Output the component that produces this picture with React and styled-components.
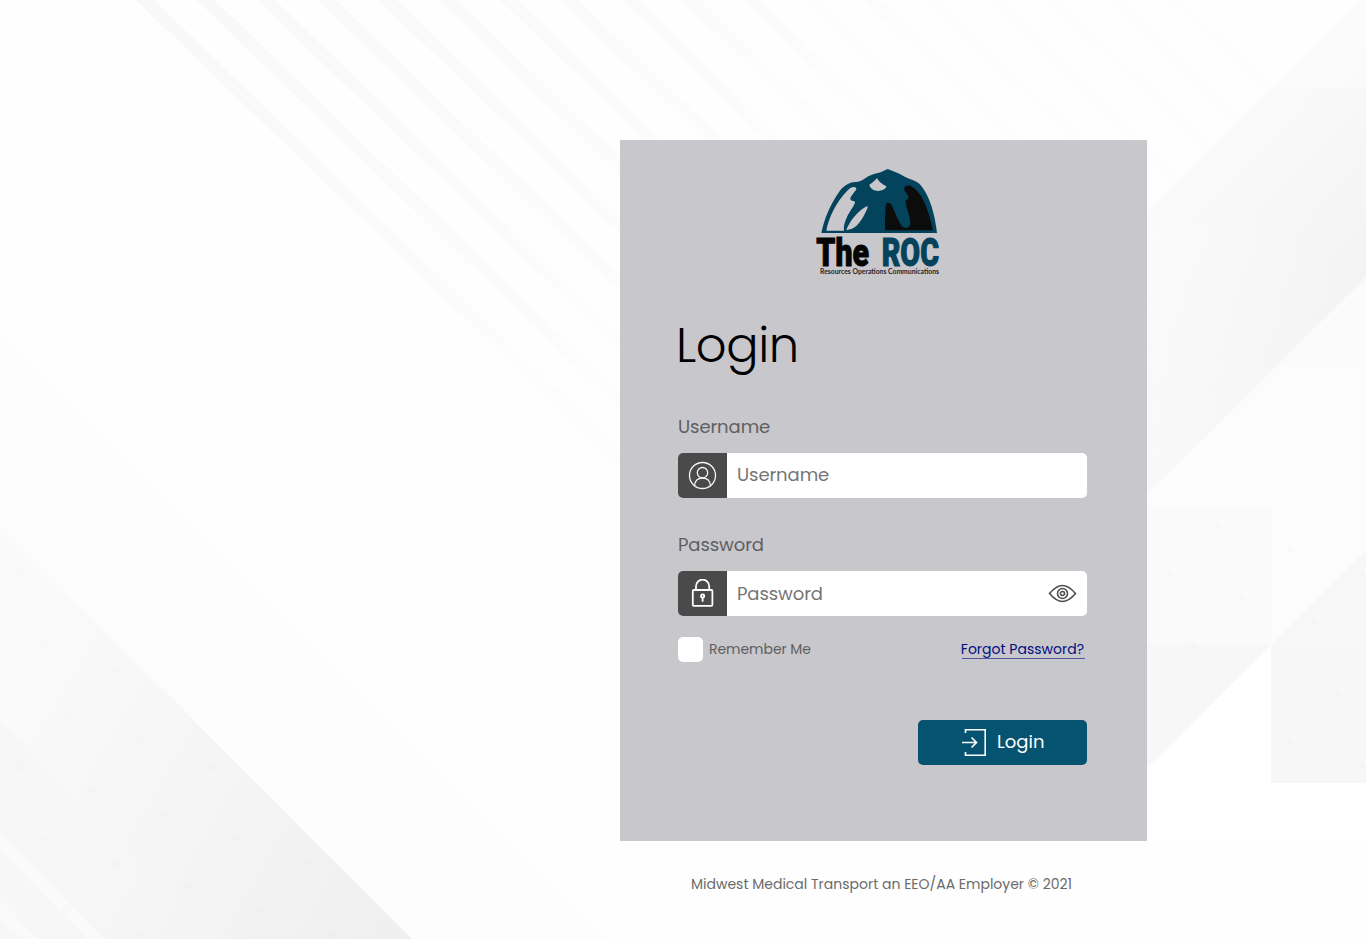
import React from "react";
import styled, { createGlobalStyle } from "styled-components";

const GlobalStyle = createGlobalStyle`
  *, *::before, *::after { box-sizing: border-box; }
  body {
    margin: 0;
    background: #fefefe;
    font-family: Poppins, Inter, "Liberation Sans", sans-serif;
    color: #5f5f61;
  }
`;

const Page = styled.main`
  position: relative;
  width: 100%;
  height: 939px;
  overflow: hidden;
  padding: 140px 0 0 620px;
`;

const Backdrop = styled.svg`
  position: absolute;
  inset: 0;
  z-index: -1;
`;

const Card = styled.form`
  display: flex;
  flex-direction: column;
  width: 527px;
  height: 701px;
  padding: 20px 60px 0 58px;
  background: #c8c7cc;
`;

const Logo = styled.svg`
  display: block;
  flex: none;
  margin-left: 127px;
  overflow: visible;
`;

const Title = styled.h1`
  margin: 25px 0 0 -2px;
  height: 72px;
  font-size: 48px;
  font-weight: 300;
  line-height: 72px;
  letter-spacing: -0.4px;
  color: #000;
`;

const Label = styled.label`
  height: 27px;
  margin-top: ${(p) => p.$gap}px;
  font-size: 18px;
  line-height: 27px;
  letter-spacing: -0.08px;
`;

const Field = styled.div`
  display: flex;
  flex: none;
  align-items: center;
  height: 45px;
  margin-top: 13px;
  border-radius: 5px;
  overflow: hidden;
  background: #fff;
`;

const FieldIcon = styled.span`
  display: flex;
  align-items: center;
  justify-content: center;
  width: 49px;
  height: 45px;
  background: #4a4a4a;
`;

const Input = styled.input`
  flex: 1;
  min-width: 0;
  height: 45px;
  padding: 0 10px ${(p) => p.$lift || 0}px;
  border: 0;
  outline: 0;
  background: transparent;
  font: inherit;
  font-size: 18px;
  letter-spacing: -0.08px;
  &::placeholder { color: #757575; opacity: 1; }
`;

const EyeButton = styled.button`
  display: flex;
  padding: 0;
  margin-right: 10px;
  border: 0;
  background: none;
`;

const Options = styled.div`
  display: flex;
  align-items: center;
  height: 25px;
  margin-top: 21px;
  font-size: 14px;
`;

const Checkbox = styled.input`
  appearance: none;
  width: 25px;
  height: 25px;
  margin: 0 6px 0 0;
  border-radius: 5px;
  background: #fff;
`;

const Remember = styled.label`
  letter-spacing: -0.05px;
`;

const Forgot = styled.a`
  margin: 0 2px 1px auto;
  border-bottom: 1px solid #5358a0;
  line-height: 18px;
  text-indent: -1px;
  padding-right: 1px;
  color: #000f80;
  text-decoration: none;
`;

const Submit = styled.button`
  display: flex;
  align-items: center;
  align-self: flex-end;
  gap: 11px;
  width: 169px;
  height: 45px;
  margin-top: 58px;
  padding: 0 0 0 43px;
  border: 0;
  border-radius: 5px;
  background: #055370;
  color: #fff;
  font: inherit;
  font-size: 18px;
`;

const SubmitText = styled.span`
  padding-bottom: 2px;
`;

const Footer = styled.footer`
  width: 527px;
  padding: 33px 4px 0 0;
  text-align: center;
  font-size: 14px;
  line-height: 21px;
  color: #6b6b6b;
`;

const STRIPES = Array.from({ length: 18 }, (_, i) => 136 + i * 60.6);
const DOTS = [
  [19, 573], [43, 645], [115, 670], [67, 717], [139, 741], [19, 766], [211, 766],
  [91, 790], [163, 814], [43, 838], [235, 838], [115, 862], [307, 862], [187, 886],
  [259, 910], [139, 934], [331, 934], [67, 910],
];
const DOTS_RIGHT = [
  [1218, 526], [1290, 550], [1170, 574], [1242, 598], [1362, 574], [1314, 622],
  [1194, 646], [1338, 694], [1290, 742], [1362, 766],
];

function Background() {
  return (
    <Backdrop width="1366" height="939" viewBox="0 0 1366 939" aria-hidden="true">
      <defs>
        <linearGradient id="stripe" gradientUnits="userSpaceOnUse" x1="140" y1="0" x2="700" y2="480">
          <stop offset="0" stopColor="#f8f8f8" />
          <stop offset="0.5" stopColor="#fbfbfb" />
          <stop offset="1" stopColor="#fdfdfd" />
        </linearGradient>
        <linearGradient id="corner" gradientUnits="userSpaceOnUse" x1="0" y1="700" x2="412" y2="939">
          <stop offset="0" stopColor="#fafafa" />
          <stop offset="1" stopColor="#efefef" />
        </linearGradient>
        <linearGradient id="inner" gradientUnits="userSpaceOnUse" x1="0" y1="800" x2="200" y2="900">
          <stop offset="0" stopColor="#f7f7f7" />
          <stop offset="1" stopColor="#f7f7f7" stopOpacity="0" />
        </linearGradient>
        <linearGradient id="haze" gradientUnits="userSpaceOnUse" x1="1215" y1="30" x2="1366" y2="181">
          <stop offset="0" stopColor="#fefefe" />
          <stop offset="1" stopColor="#f8f8f8" />
        </linearGradient>
        <linearGradient id="band" gradientUnits="userSpaceOnUse" x1="1180" y1="150" x2="1340" y2="300">
          <stop offset="0" stopColor="#fbfbfb" />
          <stop offset="1" stopColor="#f3f3f3" />
        </linearGradient>
        <linearGradient id="bandFade" x1="0" y1="1" x2="0.8" y2="0">
          <stop offset="0" stopColor="#fdfdfd" stopOpacity="0.6" />
          <stop offset="1" stopColor="#fdfdfd" stopOpacity="0" />
        </linearGradient>
      </defs>
      {STRIPES.map((x) => (
        <path key={x} d={`M${x} 0h18l500 484h-18z`} fill="url(#stripe)" />
      ))}
      <path d="M0 332 388 722H0z" fill="#fcfcfc" />
      <path d="M0 722H388L605 939H0z" fill="#fdfdfd" />
      <path d="M0 527 412 939H0z" fill="url(#corner)" />
      <path d="M0 722 217 939H0z" fill="url(#inner)" />
      <path d="M0 834 105 939H87L0 850zM0 901 38 939H22L0 917z" fill="#fafafa" />
      {DOTS.map(([x, y]) => (
        <circle key={`${x}-${y}`} cx={x} cy={y} r="5" fill="#000" fillOpacity="0.008" />
      ))}
      <path d="M1147 212 1359 0H1366V277L1147 495z" fill="url(#haze)" />
      <path d="M1147 212 1271 88H1366V277L1147 495z" fill="url(#band)" />
      <path d="M1147 227V495L1366 277V227H1147z" fill="url(#bandFade)" />
      <path d="M1366 277V366H1276z" fill="#fbfbfb" />
      <path d="M1276 366H1366V507H1147V495z" fill="#fcfcfc" />
      <path d="M1147 507H1271V645H1147z" fill="#fafafa" />
      <path d="M1271 507H1366V645H1271z" fill="#fcfcfc" />
      <path d="M1366 550V645H1271z" fill="#f8f8f8" />
      <path d="M1147 645H1271L1147 768zM1271 645H1366V783H1271z" fill="#f7f7f7" />
      <path d="M1147 768 1271 645V783H1366V841H1147z" fill="#fff" />
      {DOTS_RIGHT.map(([x, y]) => (
        <circle key={`${x}-${y}`} cx={x} cy={y} r="2.5" fill="#000" fillOpacity="0.012" />
      ))}
    </Backdrop>
  );
}

function RocLogo() {
  return (
    <Logo width="145" height="125" viewBox="0 0 435 375" role="img" aria-label="The ROC">
      <path
        d="M49 219C58 176 76 134 100 99C114 78 132 66 151 66C164 67 177 58 190 49C203 41 223 40 235 33L248 27C263 34 279 37 291 46C313 60 334 59 349 78C374 109 390 163 396 219z"
        fill="#04435c"
      />
      <path
        d="M64 212C70 176 93 127 126 93C136 82 146 78 153 83C157 88 149 94 144 101C138 109 134 115 137 119C139 124 148 121 150 126C149 137 134 153 126 171C119 186 115 201 117 212z"
        fill="#c8c7cc"
      />
      <path d="M124 210C133 187 151 163 171 148C179 142 188 136 188 140C188 146 176 170 166 184C155 201 139 210 124 210z" fill="#c8c7cc" />
      <path d="M193 74C202 69 209 62 216 54C221 64 230 72 244 79C244 87 231 92 219 93C207 92 195 85 193 74z" fill="#c8c7cc" />
      <path
        d="M240 211C240 183 240 153 243 132C246 126 254 127 259 134C269 152 278 180 290 197C297 206 311 205 315 196C320 180 305 151 302 126C300 119 309 120 310 113C311 103 299 99 298 88C297 75 311 74 322 81C357 103 374 163 384 211z"
        fill="#0c0c0d"
      />
      <g fontFamily='Roboto, "Open Sans", sans-serif' fontWeight="900" fontSize="116" strokeWidth="3">
        <text x="34" y="317" textLength="158" lengthAdjust="spacingAndGlyphs" fill="#050506" stroke="#050506">The</text>
        <text x="230" y="317" textLength="172" lengthAdjust="spacingAndGlyphs" fill="#04435c" stroke="#04435c">ROC</text>
      </g>
      <text
        x="45" y="342" textLength="357" lengthAdjust="spacingAndGlyphs"
        fontFamily="Lato, sans-serif" fontWeight="700" fontSize="20.5" fill="#242427"
      >
        Resources Operations Communications
      </text>
    </Logo>
  );
}

const UserIcon = () => (
  <svg width="29" height="29" viewBox="0 0 29 29" fill="none" stroke="#f4f4f4" strokeWidth="1.3">
    <circle cx="14.5" cy="14.5" r="13" />
    <circle cx="14.5" cy="11.7" r="5.2" />
    <path d="M6.5 25.2C6.5 19.8 10 17 14.5 17S22.5 19.8 22.5 25.2" />
  </svg>
);

const LockIcon = () => (
  <svg width="23" height="29" viewBox="0 0 23 29" fill="none" stroke="#fff" strokeWidth="1.8">
    <rect x="1.8" y="11" width="19.6" height="15.8" rx="1" />
    <path d="M5 11V7.2a6.6 6.6 0 0 1 13.2 0V11" />
    <circle cx="11.6" cy="17" r="1.6" />
    <path d="M11.6 18.500v4.300" />
  </svg>
);

const EyeIcon = () => (
  <svg width="29" height="19" viewBox="0 0 29 19" fill="none" stroke="#4f4f4f" strokeWidth="1.6">
    <path d="M1.5 9.5C4.5 6 9 1.5 14.5 1.5S24.5 6 27.5 9.5C24.5 13 20 17.5 14.5 17.5S4.5 13 1.5 9.5z" />
    <circle cx="14.5" cy="9.5" r="5" />
    <circle cx="14.5" cy="9.5" r="2" />
  </svg>
);

const LoginIcon = () => (
  <svg width="25" height="27" viewBox="0 0 25 27" fill="none" stroke="#fff" strokeWidth="1.6">
    <path d="M4.5 4V.8H24.2V26.2H4.5V23" />
    <path d="M1 13.5H15.5M10.5 8.5 15.5 13.5 10.5 18.5" />
  </svg>
);

export default function App() {
  return (
    <>
      <GlobalStyle />
      <Page>
        <Background />
        <Card onSubmit={(e) => e.preventDefault()}>
          <RocLogo />
          <Title>Login</Title>
          <Label htmlFor="username" $gap={31}>Username</Label>
          <Field>
            <FieldIcon><UserIcon /></FieldIcon>
            <Input id="username" placeholder="Username" $lift={2} />
          </Field>
          <Label htmlFor="password" $gap={33}>Password</Label>
          <Field>
            <FieldIcon><LockIcon /></FieldIcon>
            <Input id="password" type="password" placeholder="Password" />
            <EyeButton type="button" aria-label="Show password"><EyeIcon /></EyeButton>
          </Field>
          <Options>
            <Checkbox id="remember" type="checkbox" />
            <Remember htmlFor="remember">Remember Me</Remember>
            <Forgot href="#">Forgot Password?</Forgot>
          </Options>
          <Submit type="submit"><LoginIcon /><SubmitText>Login</SubmitText></Submit>
        </Card>
        <Footer>Midwest Medical Transport an EEO/AA Employer © 2021</Footer>
      </Page>
    </>
  );
}
